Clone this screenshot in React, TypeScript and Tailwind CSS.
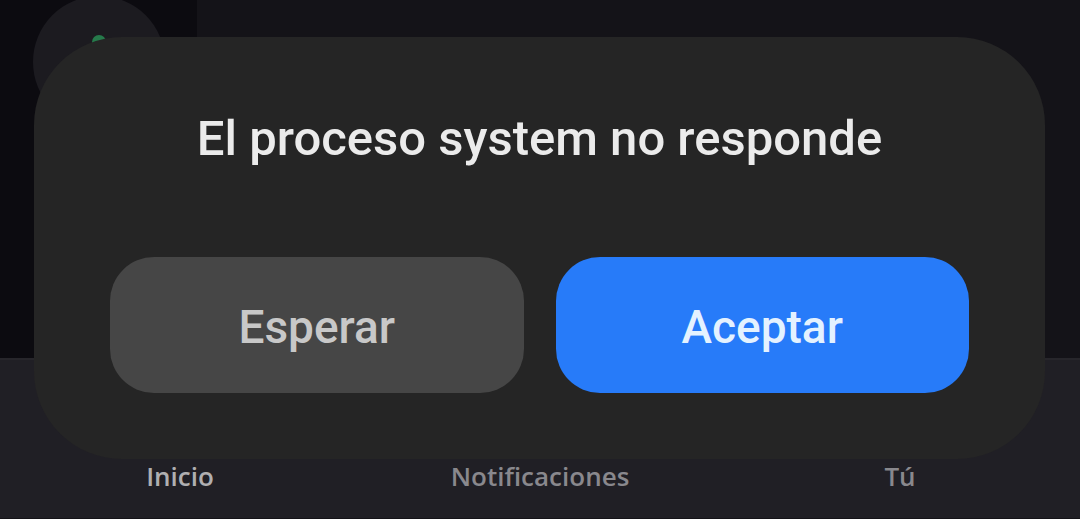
import React from 'react';

const tabs = [
  { label: 'Inicio', active: true },
  { label: 'Notificaciones', active: false },
  { label: 'Tú', active: false },
];

function AppBackdrop() {
  return (
    <div className="flex min-h-screen flex-col bg-[#141318]">
      <div className="flex flex-1 overflow-hidden">
        <aside className="w-[197px] bg-[#0c0b10] pl-[33px]">
          <div className="-mt-1 flex size-[132px] justify-center rounded-full bg-[#1c1b20] pt-[39px]">
            <span className="size-3.5 rounded-full bg-[#267a4b]" />
          </div>
        </aside>
        <main className="flex-1" />
      </div>
      <nav className="grid h-[161px] grid-cols-3 items-end border-t-2 border-b border-t-[#27262b] border-b-[#141318] bg-[#201f25] pb-[26px]">
        {tabs.map((tab) => (
          <a
            key={tab.label}
            href="#"
            className={
              tab.active
                ? 'text-center text-[26px] leading-8 font-semibold text-[#b0afb1]'
                : 'text-center text-[26px] leading-8 font-semibold text-[#89888d]'
            }
          >
            {tab.label}
          </a>
        ))}
      </nav>
    </div>
  );
}

function SystemDialog() {
  return (
    <div className="absolute inset-0 flex items-start pt-[37px] pr-[35px] pl-[34px]">
      <div
        role="alertdialog"
        aria-modal="true"
        aria-labelledby="dialog-title"
        className="w-full rounded-[88px] bg-[#252525] px-[76px] pt-[70px] pb-[66px] font-['Roboto',sans-serif] font-medium"
      >
        <h1 id="dialog-title" className="text-center text-[49px] leading-[64px] font-medium text-[#ebebeb]">
          El proceso system no responde
        </h1>
        <div className="mt-[86px] grid grid-cols-2 gap-8">
          <button type="button" className="h-[136px] rounded-[44px] bg-[#464646] pt-1 text-[46px] text-[#c8c8c8]">
            Esperar
          </button>
          <button type="button" className="h-[136px] rounded-[44px] bg-[#277bf9] pt-1 text-[46px] text-[#e4f2ff]">
            Aceptar
          </button>
        </div>
      </div>
    </div>
  );
}

export default function App() {
  return (
    <div className="relative font-['Open_Sans',sans-serif]">
      <AppBackdrop />
      <SystemDialog />
    </div>
  );
}
